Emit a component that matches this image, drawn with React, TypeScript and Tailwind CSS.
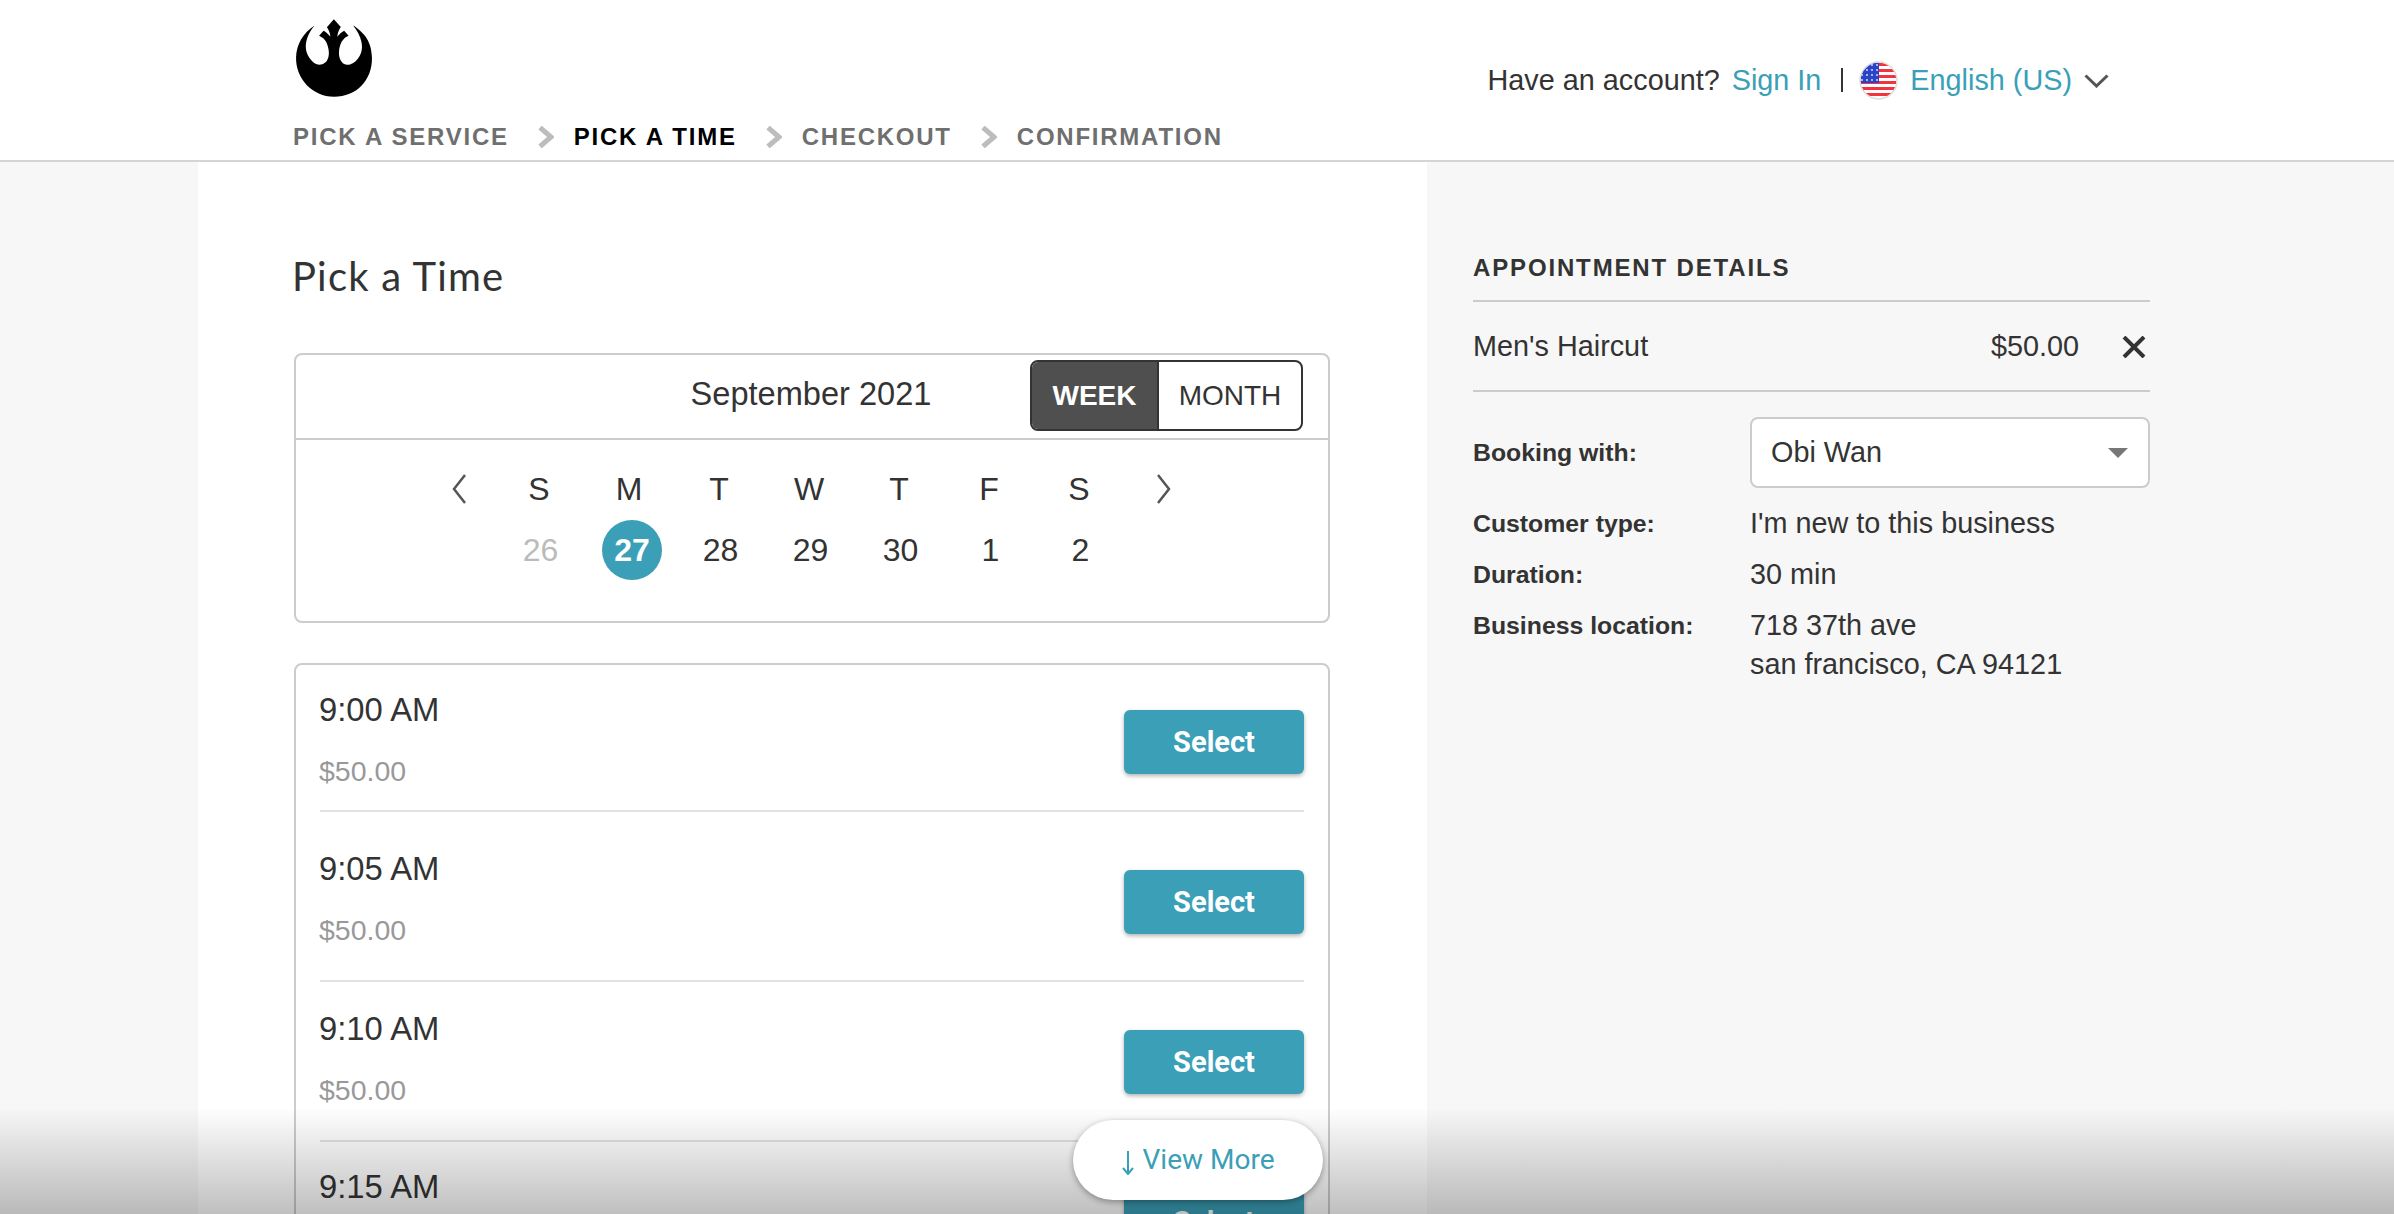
import React from 'react';
import { FaRebel } from 'react-icons/fa';

const Flag = () => (
  <svg width="39" height="39" viewBox="0 0 39 39" className="shrink-0">
    <defs>
      <clipPath id="flagClip">
        <circle cx="19.5" cy="19.5" r="18" />
      </clipPath>
    </defs>
    <g clipPath="url(#flagClip)">
      <rect width="39" height="39" fill="#fff" />
      {[2, 8, 14, 20, 26, 32].map((y) => (
        <rect key={y} x="0" y={y} width="39" height="3" fill="#f5333f" />
      ))}
      <rect x="0" y="0" width="20" height="22" fill="#2a44c8" />
      {[4, 9, 14, 19].map((y) =>
        [3, 8, 13, 18].map((x) => <circle key={`${x}-${y}`} cx={x} cy={y} r="0.9" fill="#e8ecff" />)
      )}
    </g>
    <circle cx="19.5" cy="19.5" r="18.5" fill="none" stroke="#ddd" strokeWidth="1.5" />
  </svg>
);

const StepArrow = () => (
  <svg width="16" height="22" viewBox="0 0 16 22" className="shrink-0 ml-[29px] mr-[20px]">
    <path d="M2 1.5 L13 11 L2 20.5" fill="none" stroke="#bdbdbd" strokeWidth="5" />
  </svg>
);

const steps = ['PICK A SERVICE', 'PICK A TIME', 'CHECKOUT', 'CONFIRMATION'];

const Header = () => (
  <header className="h-[162px] bg-white border-b-2 border-[#d4d4d4] pl-[293px] pr-[285px] flex justify-between">
    <div>
      <FaRebel className="text-black w-[80px] h-[80px] mt-[18px] ml-[1px]" />
      <nav className="flex items-center mt-[22px] h-[34px] text-[24px] font-bold tracking-[1.76px] text-[#6f6f6f]">
        {steps.map((s, i) => (
          <React.Fragment key={s}>
            {i > 0 && <StepArrow />}
            <span className={i === 1 ? 'text-black' : ''}>{s}</span>
          </React.Fragment>
        ))}
      </nav>
    </div>
    <div className="flex items-center h-[160px] text-[28.8px] text-[#333]">
      <span className="pt-[1px]">Have an account?</span>
      <a className="text-[#3a9fb7] ml-[12px] pt-[1px]">Sign In</a>
      <span className="w-[2px] h-[24px] bg-[#333] ml-[20px] mr-[16px]" />
      <Flag />
      <a className="text-[#3a9fb7] ml-[12px] pt-[1px]">English (US)</a>
      <svg width="25" height="14" viewBox="0 0 25 14" className="ml-[12px] mt-[2px]">
        <path d="M1.5 1.5 L12.5 12 L23.5 1.5" fill="none" stroke="#555" strokeWidth="3" />
      </svg>
    </div>
  </header>
);

const days = [
  ['S', '26'],
  ['M', '27'],
  ['T', '28'],
  ['W', '29'],
  ['T', '30'],
  ['F', '1'],
  ['S', '2'],
];

const CalendarCard = () => (
  <section className="border-2 border-[#ccc] rounded-lg h-[270px]">
    <div className="relative h-[85px] pb-[5px] border-b-2 border-[#ccc] flex items-center justify-center">
      <span className="text-[32.6px] text-[#333] -ml-[2px]">September 2021</span>
      <div className="absolute right-[25px] top-[5px] flex h-[71px] w-[273px] border-2 border-[#333] rounded-lg overflow-hidden text-[28px]">
        <span className="w-[125px] bg-[#4f4f4f] text-white font-bold flex items-center justify-center">WEEK</span>
        <span className="flex-1 border-l-2 border-[#333] text-[#333] flex items-center justify-center">MONTH</span>
      </div>
    </div>
    <div className="flex justify-center pt-[27px]">
      <svg width="16" height="30" viewBox="0 0 16 30" className="shrink-0 mt-[7px] -ml-[2px] mr-[29px]">
        <path d="M14 1 L3 15 L14 29" fill="none" stroke="#555" strokeWidth="2.5" />
      </svg>
      <div className="grid grid-cols-7 w-[630px] text-[32px] text-[#333] text-center">
        {days.map(([d, n]) => (
          <span key={n} className="h-[44px] leading-[44px] -translate-x-[1.5px]">{d}</span>
        ))}
        {days.map(([, n]) => (
          <div key={n} className="h-[60px] mt-[9px] flex items-center justify-center">
            {n === '27' ? (
              <span className="w-[60px] h-[60px] ml-[3px] rounded-full bg-[#3a9fb7] text-white font-bold flex items-center justify-center">{n}</span>
            ) : (
              <span className={n === '26' ? 'text-[#bbb]' : ''}>{n}</span>
            )}
          </div>
        ))}
      </div>
      <svg width="16" height="30" viewBox="0 0 16 30" className="shrink-0 mt-[7px] ml-[30px]">
        <path d="M2 1 L13 15 L2 29" fill="none" stroke="#555" strokeWidth="2.5" />
      </svg>
    </div>
  </section>
);

const slots = [
  { time: '9:00 AM', row: 'h-[147px] pt-[25px]', btn: 'mt-[20px]' },
  { time: '9:05 AM', row: 'h-[170px] pt-[37px]', btn: 'mt-[21px]' },
  { time: '9:10 AM', row: 'h-[160px] pt-[27px]', btn: 'mt-[21px]' },
  { time: '9:15 AM', row: 'h-[160px] pt-[25px]', btn: 'mt-[23px]' },
];

const Slot = ({ time, row, btn }: { time: string; row: string; btn: string }) => (
  <div className={`${row} border-b-2 border-[#e2e2e2] flex justify-between items-start mx-[24px]`}>
    <div className="-ml-[1px]">
      <div className="text-[32.8px] leading-[40px] text-[#333]">{time}</div>
      <div className="text-[28.5px] leading-[36px] mt-[23px] text-[#999]">$50.00</div>
    </div>
    <button className={`${btn} w-[180px] h-[64px] pt-[2px] rounded-md bg-[#3a9fb7] text-white text-[29px] font-bold shadow-[0_2px_4px_rgba(0,0,0,0.3)]`} style={{ fontFamily: 'Roboto, sans-serif' }}>
      Select
    </button>
  </div>
);

const Details = () => (
  <aside className="flex-1 pl-[46px] pt-[84px] text-[#333] text-[28.8px]">
    <div className="w-[677px]">
      <h2 className="text-[24px] font-bold tracking-[1.85px] leading-[44px] pb-[10px] border-b-2 border-[#ccc]">APPOINTMENT DETAILS</h2>
      <div className="flex items-center h-[90px] pt-[2px] border-b-2 border-[#ccc]">
        <span className="flex-1">Men's Haircut</span>
        <span>$50.00</span>
        <svg width="24" height="22" viewBox="0 0 24 22" className="ml-[43px] mr-[4px]">
          <path d="M2 1 L22 21 M22 1 L2 21" fill="none" stroke="#333" strokeWidth="4" />
        </svg>
      </div>
      <div className="grid grid-cols-[277px_1fr] items-center mt-[25px]">
        <span className="text-[24.8px] font-bold">Booking with:</span>
        <div className="h-[71px] rounded-lg border-2 border-[#ccc] bg-white flex items-center justify-between pl-[19px] pr-[20px]">
          <span>Obi Wan</span>
          <span className="w-0 h-0 border-l-[10px] border-r-[10px] border-t-[10px] border-l-transparent border-r-transparent border-t-[#777]" />
        </div>
      </div>
      <div className="grid grid-cols-[277px_1fr] mt-[16px] gap-y-[12px] leading-[39px]">
        <span className="text-[24.8px] font-bold">Customer type:</span>
        <span>I'm new to this business</span>
        <span className="text-[24.8px] font-bold">Duration:</span>
        <span>30 min</span>
        <span className="text-[24.8px] font-bold">Business location:</span>
        <span>
          718 37th ave
          <br />
          san francisco, CA 94121
        </span>
      </div>
    </div>
  </aside>
);

export default function App() {
  return (
    <div className="relative h-[1214px] overflow-hidden bg-[#f7f7f7]" style={{ fontFamily: '"Liberation Sans", Arial, sans-serif' }}>
      <Header />
      <main className="flex pl-[198px] h-[1052px]">
        <div className="w-[1229px] bg-white pl-[96px] pr-[97px] pt-[89px]">
          <h1 className="text-[40px] leading-[50px] tracking-[1.2px] -ml-[2px] text-[#333] mb-[52px]" style={{ fontFamily: 'Lato, sans-serif' }}>Pick a Time</h1>
          <CalendarCard />
          <section className="border-2 border-[#ccc] rounded-lg mt-[40px]">
            {slots.map((s) => (
              <Slot key={s.time} {...s} />
            ))}
          </section>
        </div>
        <Details />
      </main>
      {/* fade over the bottom of the page */}
      <div className="absolute inset-x-0 bottom-0 h-[107px] bg-gradient-to-b from-transparent to-black/25 pointer-events-none" />
      <button className="absolute left-[1073px] top-[1120px] w-[250px] h-[80px] rounded-full bg-white text-[#3a9fb7] text-[28px] shadow-[0_2px_6px_rgba(0,0,0,0.35)] flex items-center justify-center gap-[9px]" style={{ fontFamily: 'Roboto, sans-serif' }}>
        <svg width="12" height="24" viewBox="0 0 12 24" className="mt-[6px]">
          <path d="M6 0 V23 M1 17 L6 23 L11 17" fill="none" stroke="#3a9fb7" strokeWidth="2" />
        </svg>
        View More
      </button>
    </div>
  );
}
